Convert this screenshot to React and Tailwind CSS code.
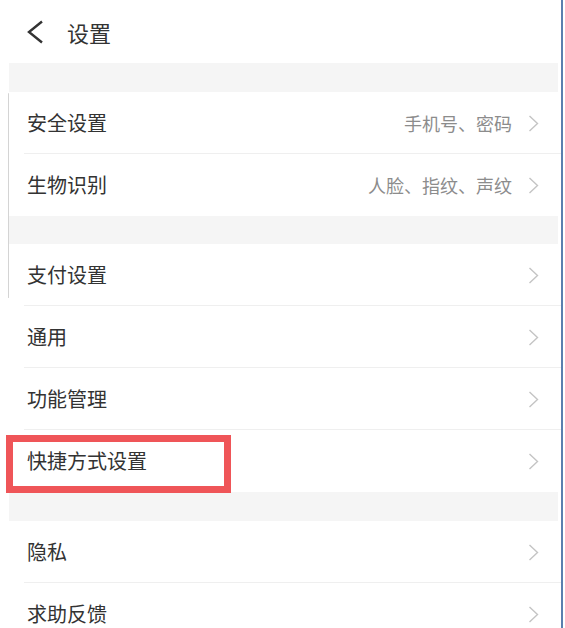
import React from 'react'

const font = { fontFamily: '"Noto Sans CJK SC", "Noto Sans", sans-serif' }

function Chevron() {
  return (
    <svg width="11" height="17" viewBox="0 0 11 17" fill="none" className="shrink-0">
      <path d="M1.5 1 L9.5 8.5 L1.5 16" stroke="#c4c4c4" strokeWidth="1.4" />
    </svg>
  )
}

function Row({ label, detail, last, marked }) {
  return (
    <div className="relative h-[62px] shrink-0 flex items-center bg-white">
      <span className="pl-[27px] text-[20px] text-[#333333] leading-none">{label}</span>
      <div className="ml-auto flex items-center gap-[16px] pr-[22px]">
        {detail && <span className="text-[18px] text-[#8c8c8c] leading-none">{detail}</span>}
        <Chevron />
      </div>
      {!last && <div className="absolute left-[24px] right-0 bottom-0 h-px bg-[#efefef]" />}
      {marked && (
        <div className="absolute left-[6px] top-[5px] w-[225px] h-[58px] border-[7px] border-[#ef5558]" />
      )}
    </div>
  )
}

function Gap({ h }) {
  return <div className={`${h} shrink-0 ml-[9px] mr-[3px] bg-[#f5f5f5]`} />
}

export default function App() {
  return (
    <div className="w-[565px] h-[628px] overflow-hidden bg-white flex" style={font}>
      <div className="relative w-[561px] flex flex-col">
        {/* header */}
        <div className="h-[63px] shrink-0 flex items-center">
          <svg width="17" height="24" viewBox="0 0 17 24" fill="none" className="ml-[27px]">
            <path d="M15 1.5 L2 12 L15 22.5" stroke="#333333" strokeWidth="2.4" />
          </svg>
          <span className="ml-[23px] text-[22px] text-[#333333] leading-none">设置</span>
        </div>

        <Gap h="h-[29px]" />
        <Row label="安全设置" detail="手机号、密码" />
        <Row label="生物识别" detail="人脸、指纹、声纹" last />
        <Gap h="h-[28px]" />
        <Row label="支付设置" />
        <Row label="通用" />
        <Row label="功能管理" />
        <Row label="快捷方式设置" last marked />
        <Gap h="h-[29px]" />
        <Row label="隐私" />
        <Row label="求助反馈" />

        {/* faint edge line on the left */}
        <div className="absolute left-[8px] top-[93px] w-px h-[205px] bg-[#d4d4d4] rounded-full" />
      </div>
      <div className="w-[2px] h-full bg-[#5a7fae]" />
      <div className="flex-1 bg-white" />
    </div>
  )
}
